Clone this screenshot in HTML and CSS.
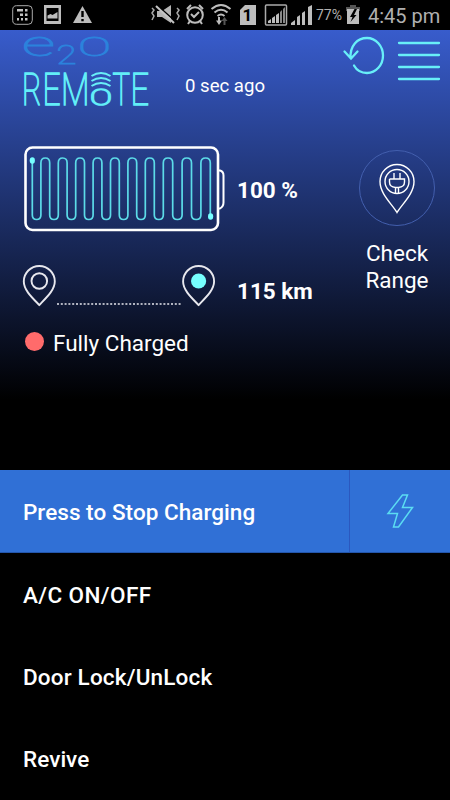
FILE: index.html
```
<!DOCTYPE html>
<html lang="en">
<head>
    <meta charset="UTF-8">
    <meta name="viewport" content="width=device-width, initial-scale=1.0">
    <title>e2o Remote</title>
    <link rel="stylesheet" href="styles.css">
</head>
<body>

    <div class="status-bar">
        <svg class="status-icons" width="314" height="30" viewBox="0 0 314 30">
            <!-- notifications -->
            <rect x="12.7" y="5.7" width="19.6" height="18.6" rx="4" fill="none" stroke="#aaa"/>
            <g fill="#c4c4c4">
                <path d="M17 9h6v2.500h-6zM20 13.500h3V16h-3z"/>
                <path d="M25 9h2.500v2.500h-2.500zM25 13.500h2.500v2.500h-2.500zM17 18h2v2.500h-2zM21 18h2v2.500h-2zM25 18h2.500v2.500h-2.500z"/>
            </g>
            <path d="M44 5h17v19H44zM46.500 8v13h12V8z" fill="#bdbdbd" fill-rule="evenodd"/>
            <path d="M47.500 18.500v-3l3-1.500 2 1 5-3v6.500z" fill="#bdbdbd"/>
            <path d="M82.500 6L92 23H73z" fill="#bdbdbd"/>
            <path d="M81.300 11h2.400v6h-2.400zM81.300 19h2.400v2.200h-2.400z" fill="#000"/>
            <!-- vibrate -->
            <path d="M157 11h5l9-6v18l-9-6h-5z" fill="#b4b4b4"/>
            <path d="M157 5l18 16" stroke="#000" stroke-width="1.500"/>
            <path d="M156 6l18 17" stroke="#c4c4c4" stroke-width="2"/>
            <path d="M152 8l2 2-2 3 2 3-2 4M177 8l2 2-2 3 2 3-2 4" fill="none" stroke="#aaa" stroke-width="1.500"/>
            <!-- alarm -->
            <g fill="none" stroke="#bdbdbd" stroke-width="2">
                <circle cx="195" cy="15" r="7.800"/>
                <path d="M187 9l4-4M203 9l-4-4M190 21l-2 3M200 21l2 3M191 14l3 3 5-5"/>
            </g>
            <!-- wifi -->
            <g fill="none" stroke="#bdbdbd" stroke-width="2">
                <path d="M211.500 9q9.500-8 19 0M214.500 12.500q6.500-5.500 13 0M217.500 16q3.500-3 7 0"/>
                <path d="M219 17v6"/>
            </g>
            <path d="M216 20.500h6l-3 4.500z" fill="#bdbdbd"/>
            <path d="M221.500 21l3-4 3 4h-2v4h-2v-4z" fill="#555"/>
            <!-- sim and signal -->
            <path d="M245 5h11v20h-16V10z" fill="#bdbdbd"/>
            <text class="sim" x="242.500" y="21">1</text>
            <rect x="265.500" y="5" width="21" height="20" rx="1" fill="none" stroke="#aaa" stroke-width="1.500"/>
            <path d="M268 23v-2l3-2v4zM272 23v-5l3-2v7zM276 23v-8l3-2v10z" fill="#bdbdbd"/>
            <path d="M280 23V12l2-2v13zM283 23V9l2-2v16z" fill="#888"/>
            <path d="M291 25v-2l4-3v5zM297 25v-8l3-2v10zM302 25V13l3-2v14zM308 25V7l4-2v20z" fill="#bdbdbd"/>
        </svg>
        <span class="battery-level">77%</span>
        <svg width="14" height="22" viewBox="0 0 14 22">
            <path d="M4 1h6v2h4v4H0V3h4z" fill="#555"/>
            <path d="M1 5h12v15H1z" fill="#bdbdbd"/>
            <path d="M8.500 5L4 13h2.500L4.500 18l6-7H8l3-6z" fill="#000"/>
        </svg>
        <span class="clock">4:45 pm</span>
    </div>

    <div class="hero">
        <div class="top">
            <svg class="logo" width="128" height="74" viewBox="22 35 128 74">
                <g class="logo-brand">
                    <text x="22" y="56" font-size="35" textLength="33" lengthAdjust="spacingAndGlyphs">e</text>
                    <text x="56.500" y="63.500" font-size="25" textLength="20" lengthAdjust="spacingAndGlyphs">2</text>
                    <text x="78" y="55.500" font-size="25" textLength="33" lengthAdjust="spacingAndGlyphs">O</text>
                </g>
                <g class="logo-name">
                    <text x="22" y="105" font-size="45" textLength="19.500" lengthAdjust="spacingAndGlyphs">R</text>
                    <text x="42.500" y="105" font-size="45" textLength="18" lengthAdjust="spacingAndGlyphs">E</text>
                    <text x="61" y="105" font-size="45" textLength="28.500" lengthAdjust="spacingAndGlyphs">M</text>
                    <text x="90" y="105" font-size="22" textLength="22" lengthAdjust="spacingAndGlyphs">O</text>
                    <text x="112.500" y="105" font-size="45" textLength="17.500" lengthAdjust="spacingAndGlyphs">T</text>
                    <text x="130.500" y="105" font-size="45" textLength="18.500" lengthAdjust="spacingAndGlyphs">E</text>
                </g>
                <path class="waves" d="M91.500 76q9.500-6 19 0M91.500 81q9.500-6 19 0M91.500 86q9.500-6 19 0"/>
            </svg>
            <span class="updated">0 sec ago</span>
            <svg class="refresh" width="44" height="42" viewBox="342 35 44 42">
                <path d="M350.500 58C350 46 357 38 367 38c9 0 16 8 16 17.500S376 73 367 73c-6 0-10.500-3-13-7.500M344.500 51.500l6.500 7 6.500-7"/>
            </svg>
            <svg class="menu" width="44" height="42" viewBox="0 0 44 42">
                <path d="M2 2h40M2 14h40M2 26h40M2 38h40"/>
            </svg>
        </div>

        <div class="content">
            <div class="readings">
                <div class="reading battery">
                    <svg width="203" height="88" viewBox="23 145 203 88">
                        <rect x="25.500" y="147.500" width="192.500" height="82.500" rx="7" fill="none" stroke="#fff" stroke-width="2.600"/>
                        <path d="M218.500 170.500h1.500q3.500 1 3.500 5v27q0 4-3.500 6h-1.500" fill="none" stroke="#fff" stroke-width="2"/>
                        <path class="coil" d="M32.300 161v54q0 4.500 4.300 4.500t4.300-4.500v-52q0-5 4.400-5t4.400 5v52q0 4.500 4.300 4.500t4.300-4.500v-52q0-5 4.400-5t4.400 5v52q0 4.500 4.300 4.500t4.300-4.500v-52q0-5 4.400-5t4.400 5v52q0 4.500 4.300 4.500t4.300-4.500v-52q0-5 4.400-5t4.400 5v52q0 4.500 4.300 4.500t4.300-4.500v-52q0-5 4.400-5t4.400 5v52q0 4.500 4.300 4.500t4.300-4.500v-52q0-5 4.400-5t4.400 5v52q0 4.500 4.300 4.500t4.300-4.500v-52q0-5 4.500-5t4.500 5v52q0 4.500 4.500 4.500t4.500-4.500v-52q0-5 4.700-5t4.700 5v52q0 4.500 4.700 4.500t4.700-4.500v-52q0-5 4.700-5t4.700 5v52q0 4.500 4.700 4.500t4.700-4.500v-52q0-5 4.700-5t4.700 5v53"/>
                        <ellipse cx="32.300" cy="160.500" rx="2.600" ry="3.300" fill="#76ffff"/>
                        <ellipse cx="210.600" cy="216.500" rx="2.600" ry="3.300" fill="#76ffff"/>
                    </svg>
                    <span class="value">100 %</span>
                </div>
                <div class="reading range">
                    <svg width="203" height="44" viewBox="22 264 203 44">
                        <g fill="none" stroke="#e8e8ee" stroke-width="1.900">
                            <path id="pin" d="M39.300 305C32 297.500 23.800 290 23.800 281.500a15.500 15.500 0 0 1 31 0C54.800 290 46.500 297.500 39.300 305z"/>
                            <circle cx="39.300" cy="281" r="7.800"/>
                            <use href="#pin" x="159.300"/>
                            <path d="M57 304h125" stroke-dasharray="2 1.800" stroke-width="1.300"/>
                        </g>
                        <circle cx="198.600" cy="281" r="7.600" fill="#76ffff"/>
                    </svg>
                    <span class="value">115 km</span>
                </div>
                <div class="charge">
                    <span class="dot"></span>
                    <span>Fully Charged</span>
                </div>
            </div>

            <div class="check-range">
                <div class="circle">
                    <svg width="38" height="52" viewBox="0 0 38 52">
                        <g fill="none" stroke="#fff" stroke-width="1.400">
                            <path d="M19 49.500C14 41 2 31 2 18.500a17 17 0 0 1 34 0C36 31 24 41 19 49.500z"/>
                            <circle cx="19" cy="18.500" r="12"/>
                            <path d="M16 10v6M22 10v6M11.500 16h15v3q0 5-6 5.500V31M11.500 16v3q0 5 6 5.500V31M17.500 24.500h3"/>
                        </g>
                    </svg>
                </div>
                <p>Check<br>Range</p>
            </div>
        </div>
    </div>

    <div class="actions">
        <div class="action active">
            <span>Press to Stop Charging</span>
            <div class="bolt">
                <svg width="28" height="36" viewBox="0 0 28 36">
                    <path d="M16.500 2h5l-5 12.500h10L12.500 34h-5l4-13.500H2z"/>
                </svg>
            </div>
        </div>
        <div class="action ac">A/C ON/OFF</div>
        <div class="action lock">Door Lock/UnLock</div>
        <div class="action">Revive</div>
    </div>

</body>
</html>
```
FILE: styles.css
```
* {
    box-sizing: border-box;
}
body {
    width: 450px;
    height: 800px;
    margin: 0;
    background-color: #000;
    color: #fff;
    font-family: Roboto, sans-serif;
    font-size: 22.5px;
    overflow: hidden;
}
svg {
    display: block;
    flex-shrink: 0;
}
.status-bar {
    height: 30px;
    display: flex;
    align-items: center;
    color: #b0b0b0;
    white-space: nowrap;
}
.sim {
    font-size: 17px;
    font-weight: bold;
    fill: #000;
}
.battery-level {
    width: 30px;
    padding-left: 2px;
    font-size: 14px;
}
.status-bar .clock {
    margin: 2px 0 0 8px;
    font-size: 20px;
}
.battery-level + svg {
    margin-left: 2px;
}
.hero {
    height: 440px;
    background: linear-gradient(#385ccc, #000 84%);
}
.top {
    height: 115px;
    padding: 5px 9px 0 22px;
    display: flex;
    align-items: flex-start;
}
.logo {
    overflow: visible;
}
.logo text {
    font-weight: 100;
}
.logo-brand {
    fill: #2b82dc;
    stroke: #2b82dc;
    stroke-width: 0.9;
}
.logo-name {
    fill: #62eef8;
    stroke: #62eef8;
    stroke-width: 1.5;
}
.waves,
.coil,
.refresh,
.menu {
    fill: none;
    stroke: #68eff8;
    stroke-width: 2;
}
.coil {
    stroke: #5cdbe8;
    stroke-width: 1.7;
}
.refresh,
.menu {
    stroke-width: 2.3;
    stroke-linecap: round;
}
.updated {
    width: 157px;
    padding: 40px 0 0 35px;
    font-size: 18.6px;
    line-height: 23px;
}
.refresh {
    margin-left: 35px;
}
.menu {
    margin: 6px 0 0 11px;
}
.content {
    display: flex;
    justify-content: space-between;
    padding: 0 15px 0 22px;
}
.reading {
    display: flex;
    align-items: center;
}
.reading .value {
    margin: 2px 0 0 11px;
    font-size: 22.5px;
    font-weight: bold;
}
.battery {
    padding-left: 1px;
}
.range {
    margin-top: 31px;
}
.range .value {
    margin: 10px 0 0 12px;
}
.charge {
    display: flex;
    align-items: center;
    gap: 9px;
    margin: 22px 0 0 3px;
}
.dot {
    width: 19px;
    height: 19px;
    border-radius: 50%;
    background-color: #ff6b6b;
    margin-top: -3px;
}
.check-range {
    width: 76px;
    padding-top: 5px;
    text-align: center;
}
.circle {
    width: 76px;
    height: 76px;
    border: 1px solid #435fae;
    border-radius: 50%;
    display: flex;
    justify-content: center;
    padding-top: 12px;
}
.check-range p {
    margin: 14px 0 0;
    line-height: 26.5px;
}
.action {
    height: 82.5px;
    padding: 1px 0 0 23px;
    display: flex;
    align-items: center;
    justify-content: space-between;
    font-weight: 500;
    font-kerning: none;
}
.action.active {
    padding-top: 0;
    background-color: #3070d6;
    border-bottom: 1px solid #2456ab;
}
.action.active span {
    padding-top: 2px;
}
.ac {
    padding-top: 2px;
    letter-spacing: 0.4px;
}
.lock {
    letter-spacing: 0.17px;
}
.bolt {
    width: 101px;
    height: 100%;
    border-left: 1px solid #2b58bf;
    display: flex;
    align-items: center;
    justify-content: center;
}
.bolt path {
    fill: none;
    stroke: #5bdcf2;
    stroke-width: 1.5;
}
```
